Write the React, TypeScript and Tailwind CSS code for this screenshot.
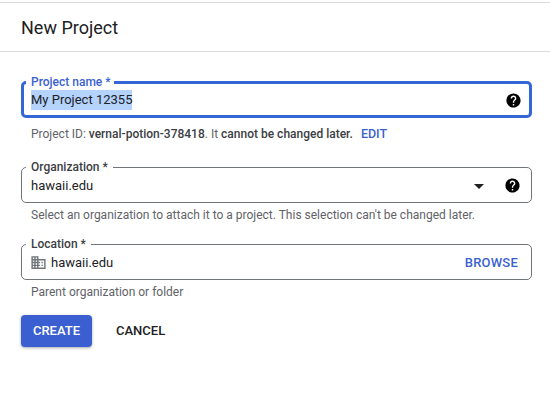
const HelpIcon = () => (
  <svg viewBox="0 0 24 24" className="w-[17px] h-[17px] shrink-0" fill="#000">
    <path d="M12 2C6.48 2 2 6.48 2 12s4.48 10 10 10 10-4.48 10-10S17.52 2 12 2zm1 17h-2v-2h2v2zm2.07-7.75l-.9.92C13.45 12.9 13 13.5 13 15h-2v-.5c0-1.1.45-2.1 1.17-2.83l1.24-1.26c.37-.36.59-.86.59-1.41 0-1.1-.9-2-2-2s-2 .9-2 2H8c0-2.21 1.79-4 4-4s4 1.79 4 4c0 .88-.36 1.68-.93 2.25z" />
  </svg>
);

const BusinessIcon = () => (
  <svg viewBox="0 0 24 24" className="ml-[-1px] w-[17px] h-[17px] shrink-0" fill="#70757a">
    <path d="M12 7V3H2v18h20V7H12zM6 19H4v-2h2v2zm0-4H4v-2h2v2zm0-4H4V9h2v2zm0-4H4V5h2v2zm4 12H8v-2h2v2zm0-4H8v-2h2v2zm0-4H8V9h2v2zm0-4H8V5h2v2zm10 12h-8v-2h2v-2h-2v-2h2v-2h-2V9h8v10zm-2-8h-2v2h2v-2zm0 4h-2v2h2v-2z" />
  </svg>
);

const App = () => {
  return (
    <div className="w-[550px] h-[417px] bg-white overflow-hidden font-['Roboto',sans-serif]">
      {/* Header */}
      <div className="mt-[2px] h-[50px] border-y border-[#dadce0] pl-[21px] pt-[1px] flex items-center">
        <h1 className="text-[18px] text-[#202124] leading-none">New Project</h1>
      </div>

      <div className="pl-[21px] w-[532px]">
        {/* Project name */}
        <fieldset className="mt-[22px] h-[44px] border-[3px] border-[#3367d6] rounded-[5px] pl-[7px] pr-[7px] flex items-center">
          <legend className="ml-[-5px] pl-[5px] pr-[3px] text-[12px] leading-[16px] font-medium text-[#3b62d0]">
            Project name *
          </legend>
          <div className="flex items-center w-full h-[24px] mt-[-5px]">
            <span className="bg-[#b4d3fe] text-[13px] leading-[20px] text-[#202124]">My Project 12355</span>
            <span className="ml-auto flex">
              <HelpIcon />
            </span>
          </div>
        </fieldset>
        <p className="mt-[8px] pl-[10px] text-[12px] leading-[16px] text-[#5f6368]">
          Project ID: <span className="font-medium text-[#3c4043]">vernal-potion-378418</span>. It{" "}
          <span className="font-medium text-[#3c4043]">cannot be changed later.</span>
          <span className="ml-[8px] text-[12.5px] font-medium text-[#3b62d0]">EDIT</span>
        </p>

        {/* Organization */}
        <fieldset className="mt-[17px] h-[44px] border border-[#70757a] rounded-[5px] pl-[9px] pr-[10px] flex items-center">
          <legend className="ml-[-5px] pl-[5px] pr-[5px] text-[12px] leading-[16px] font-medium text-[#3c4043]">
            Organization *
          </legend>
          <div className="flex items-center w-full h-[24px] mt-[-6px]">
            <span className="text-[13px] leading-[20px] text-[#202124]">hawaii.edu</span>
            <span className="ml-auto mr-[20px] mt-[1px] w-0 h-0 border-x-[5px] border-x-transparent border-t-[5px] border-t-[#202124]" />
            <HelpIcon />
          </div>
        </fieldset>
        <p className="mt-[4px] pl-[10px] text-[12px] leading-[16px] text-[#5f6368]">
          Select an organization to attach it to a project. This selection can't be changed later.
        </p>

        {/* Location */}
        <fieldset className="mt-[13px] h-[44px] border border-[#70757a] rounded-[5px] pl-[9px] pr-[13px] flex items-center">
          <legend className="ml-[-5px] pl-[5px] pr-[5px] text-[12px] leading-[16px] font-medium text-[#3c4043]">
            Location *
          </legend>
          <div className="flex items-center w-full h-[24px] mt-[-6px]">
            <BusinessIcon />
            <span className="ml-[4px] text-[13px] leading-[20px] text-[#202124]">hawaii.edu</span>
            <span className="ml-auto text-[13px] font-medium tracking-[0.2px] text-[#3b62d0]">BROWSE</span>
          </div>
        </fieldset>
        <p className="mt-[4px] pl-[10px] text-[12px] leading-[16px] text-[#5f6368]">Parent organization or folder</p>

        {/* Actions */}
        <div className="mt-[15px] flex items-center">
          <button className="w-[71px] h-[32px] rounded-[4px] bg-[#3b5fd0] shadow-[0_1px_3px_rgba(60,64,67,0.45)] text-[13px] font-medium text-white">
            CREATE
          </button>
          <button className="ml-[24px] text-[13px] font-medium text-[#202124]">CANCEL</button>
        </div>
      </div>
    </div>
  );
};

export default App;
